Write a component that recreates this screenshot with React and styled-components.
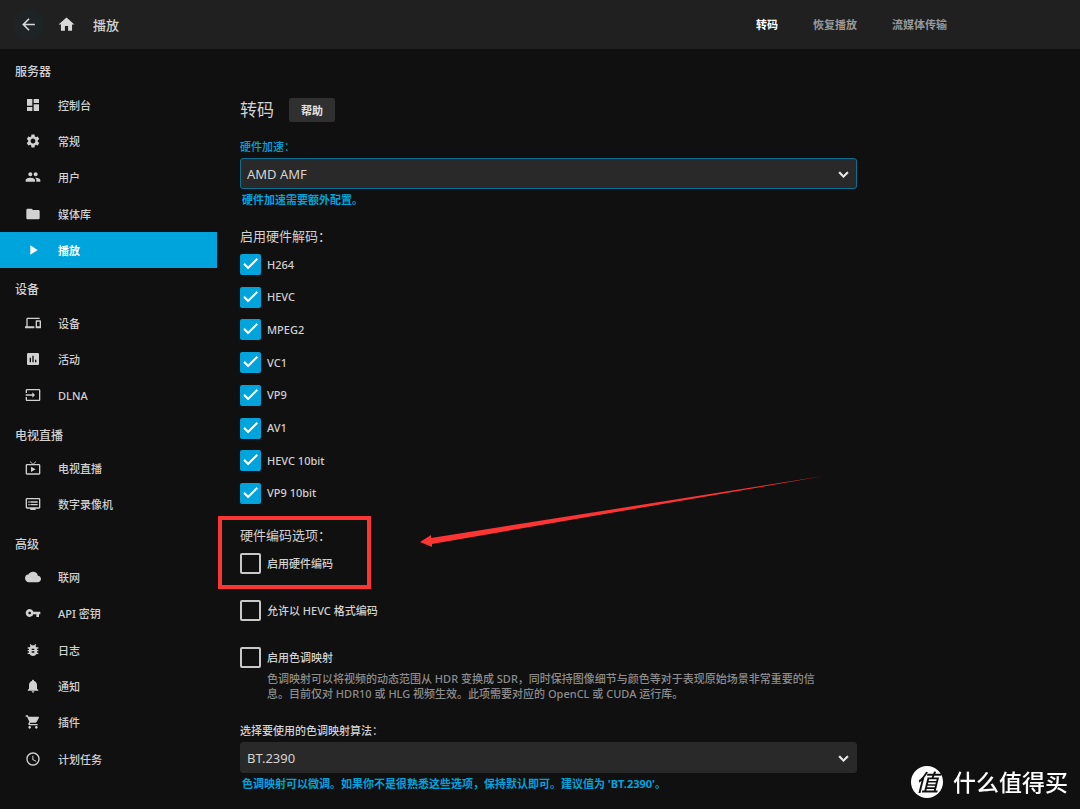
import React, { useState } from 'react';
import styled, { createGlobalStyle } from 'styled-components';
import {
  MdArrowBack,
  MdHome,
  MdDashboard,
  MdSettings,
  MdPeople,
  MdFolder,
  MdPlayArrow,
  MdDevices,
  MdInsertChart,
  MdInput,
  MdLiveTv,
  MdDvr,
  MdCloud,
  MdVpnKey,
  MdBugReport,
  MdNotifications,
  MdShoppingCart,
  MdAccessTime,
  MdCheck,
  MdKeyboardArrowDown,
} from 'react-icons/md';

const menu = [
  {
    title: '服务器',
    items: [
      { name: '控制台', icon: MdDashboard },
      { name: '常规', icon: MdSettings },
      { name: '用户', icon: MdPeople },
      { name: '媒体库', icon: MdFolder },
      { name: '播放', icon: MdPlayArrow, active: true },
    ],
  },
  {
    title: '设备',
    items: [
      { name: '设备', icon: MdDevices },
      { name: '活动', icon: MdInsertChart },
      { name: 'DLNA', icon: MdInput },
    ],
  },
  {
    title: '电视直播',
    items: [
      { name: '电视直播', icon: MdLiveTv },
      { name: '数字录像机', icon: MdDvr },
    ],
  },
  {
    title: '高级',
    items: [
      { name: '联网', icon: MdCloud },
      { name: 'API 密钥', icon: MdVpnKey },
      { name: '日志', icon: MdBugReport },
      { name: '通知', icon: MdNotifications },
      { name: '插件', icon: MdShoppingCart },
      { name: '计划任务', icon: MdAccessTime },
    ],
  },
];

const tabs = ['转码', '恢复播放', '流媒体传输'];

const codecs = ['H264', 'HEVC', 'MPEG2', 'VC1', 'VP9', 'AV1', 'HEVC 10bit', 'VP9 10bit'];

const Checkbox = ({ label, defaultChecked = false }) => {
  const [checked, setChecked] = useState(defaultChecked);

  return (
    <CheckLabel>
      <CheckBox>
        <CheckInput
          type='checkbox'
          checked={checked}
          onChange={(e) => setChecked(e.target.checked)}
        />
        {checked && <MdCheck size={19} />}
      </CheckBox>
      {label}
    </CheckLabel>
  );
};

const SelectField = ({ id, label, options, help, focused }) => (
  <Field>
    <FieldLabel htmlFor={id} $focused={focused}>
      {label}
    </FieldLabel>
    <SelectWrap>
      <Select id={id} $focused={focused}>
        {options.map((option) => (
          <option key={option}>{option}</option>
        ))}
      </Select>
      <MdKeyboardArrowDown size={19} />
    </SelectWrap>
    <FieldHelp href='#help'>{help}</FieldHelp>
  </Field>
);

const App = () => {
  const [tab, setTab] = useState(tabs[0]);

  return (
    <React.Fragment>
      <GlobalStyle />
      <Header>
        <IconButton aria-label='返回' $lit>
          <MdArrowBack size={19} />
        </IconButton>
        <IconButton aria-label='主页'>
          <MdHome size={19} />
        </IconButton>
        <PageTitle>播放</PageTitle>
        <Tabs>
          {tabs.map((name) => (
            <Tab key={name} $active={name === tab} onClick={() => setTab(name)}>
              {name}
            </Tab>
          ))}
        </Tabs>
      </Header>
      <Body>
        <Sidebar>
          {menu.map((group) => (
            <React.Fragment key={group.title}>
              <MenuTitle>{group.title}</MenuTitle>
              {group.items.map(({ name, icon: Icon, active }) => (
                <MenuLink key={name} href='#menu' $active={active}>
                  <Icon size={16} />
                  <span>{name}</span>
                </MenuLink>
              ))}
            </React.Fragment>
          ))}
        </Sidebar>
        <Main>
          <TitleRow>
            <Title>转码</Title>
            <HelpButton>帮助</HelpButton>
          </TitleRow>

          <SelectField
            id='accel'
            label='硬件加速：'
            options={['AMD AMF']}
            help='硬件加速需要额外配置。'
            focused
          />

          <Section>
            <SectionTitle>启用硬件解码：</SectionTitle>
            <CodecList>
              {codecs.map((codec) => (
                <Checkbox key={codec} label={codec} defaultChecked />
              ))}
            </CodecList>
          </Section>

          <Section>
            <SectionTitle>硬件编码选项：</SectionTitle>
            <Options>
              <Checkbox label='启用硬件编码' />
              <Checkbox label='允许以 HEVC 格式编码' />
              <div>
                <Checkbox label='启用色调映射' />
                <Description>
                  色调映射可以将视频的动态范围从 HDR 变换成
                  SDR，同时保持图像细节与颜色等对于表现原始场景非常重要的信息。目前仅对 HDR10 或 HLG
                  视频生效。此项需要对应的 OpenCL 或 CUDA 运行库。
                </Description>
              </div>
            </Options>
            <Highlight />
            <Arrow width='404' height='74' viewBox='0 0 404 74'>
              <path d='M0 68 L11 61 L11 64 L404 2 L12 70 L12 73 Z' />
            </Arrow>
          </Section>

          <SelectField
            id='algorithm'
            label='选择要使用的色调映射算法：'
            options={['BT.2390']}
            help="色调映射可以微调。如果你不是很熟悉这些选项，保持默认即可。建议值为 'BT.2390'。"
          />
        </Main>
      </Body>
      <Watermark>
        <WatermarkLogo>值</WatermarkLogo>
        什么值得买
      </Watermark>
    </React.Fragment>
  );
};

export default App;

const GlobalStyle = createGlobalStyle`
  * {
    box-sizing: border-box;
  }

  body {
    margin: 0;
    background: #101010;
    color: #d1d1d1;
    font-family: 'Noto Sans', 'Noto Sans CJK SC', sans-serif;
    font-size: 11px;
    line-height: 16px;
  }

  button,
  select {
    font-family: inherit;
  }

  h1,
  h2,
  h3,
  p {
    margin: 0;
    font-weight: 400;
  }

  svg {
    flex-shrink: 0;
  }
`;

const Header = styled.header`
  display: flex;
  align-items: center;
  height: 49px;
  padding: 0 133px 0 13px;
  background: #202020;
`;

const IconButton = styled.button`
  display: flex;
  align-items: center;
  justify-content: center;
  width: 30px;
  height: 30px;
  margin-right: 8px;
  padding: 0;
  border: 0;
  border-radius: 50%;
  background: ${(props) => (props.$lit ? '#1e2426' : 'transparent')};
  color: #d8d8d8;
`;

const PageTitle = styled.h1`
  margin-left: 4px;
  font-size: 13px;
  font-weight: 500;
`;

const Tabs = styled.nav`
  display: flex;
  gap: 35px;
  margin-left: auto;
`;

const Tab = styled.button`
  padding: 0;
  border: 0;
  background: none;
  color: ${(props) => (props.$active ? '#fff' : '#999')};
  font-size: 11px;
  font-weight: 700;
  line-height: 16px;
`;

const Body = styled.div`
  display: flex;
  align-items: flex-start;
`;

const Sidebar = styled.nav`
  display: grid;
  flex: 0 0 217px;
  grid-auto-rows: 1fr;
  min-height: 728px;
  padding-top: 1px;
`;

const MenuTitle = styled.h3`
  display: flex;
  align-items: center;
  padding: 8px 0 0 15px;
  font-size: 12px;
  font-weight: 500;
`;

const MenuLink = styled.a`
  display: flex;
  align-items: center;
  gap: 17px;
  padding-left: 25px;
  background: ${(props) => (props.$active ? '#00a4dc' : 'transparent')};
  color: ${(props) => (props.$active ? '#fff' : 'inherit')};
  font-weight: ${(props) => (props.$active ? 700 : 500)};
  text-decoration: none;

  span {
    padding-top: 2px;
  }
`;

const Main = styled.main`
  flex: 1;
  min-width: 0;
  max-width: 663px;
  padding: 49px 23px 16px;
`;

const TitleRow = styled.div`
  display: flex;
  align-items: center;
  gap: 15px;
  margin-bottom: 17px;
`;

const Title = styled.h2`
  font-size: 17px;
  line-height: 24px;
`;

const HelpButton = styled.button`
  height: 24px;
  padding: 0 12px;
  border: 0;
  border-radius: 2px;
  background: #303030;
  color: #e0e0e0;
  font-size: 11px;
  font-weight: 700;
`;

const Field = styled.div`
  display: flex;
  flex-direction: column;
`;

const FieldLabel = styled.label`
  margin-bottom: 3px;
  color: ${(props) => (props.$focused ? '#00a4dc' : 'inherit')};
  font-weight: 500;
`;

const SelectWrap = styled.div`
  display: grid;
  align-items: center;
  margin-bottom: 3px;

  > * {
    grid-area: 1 / 1;
  }

  svg {
    justify-self: end;
    margin: 2px 4px 0 0;
    color: #e8e8e8;
    pointer-events: none;
  }

  path:last-child {
    stroke-width: 1px;
  }
`;

const Select = styled.select`
  width: 100%;
  height: 31px;
  padding: 0 6px;
  appearance: none;
  border: 1px solid ${(props) => (props.$focused ? '#0b6f92' : '#292929')};
  border-radius: 3px;
  outline: none;
  background: #292929;
  color: #d4d4d4;
  font-size: 13px;
`;

const FieldHelp = styled.a`
  padding-left: 2px;
  color: #00a4dc;
  font-weight: 700;
  text-decoration: none;
`;

const Section = styled.section`
  position: relative;
  margin: 19px 0 22px;
`;

const SectionTitle = styled.h3`
  margin-bottom: 9px;
  font-size: 13px;
  line-height: 18px;
`;

const CodecList = styled.div`
  display: grid;
  align-content: space-between;
  height: 250px;
`;

const Options = styled.div`
  display: grid;
  gap: 26px;
`;

const CheckLabel = styled.label`
  display: flex;
  align-items: center;
  gap: 6px;
  font-weight: 500;
`;

const CheckBox = styled.span`
  display: grid;
  place-items: center;
  width: 21px;
  height: 21px;

  > * {
    grid-area: 1 / 1;
  }

  svg {
    margin-bottom: 2px;
    color: #fff;
    pointer-events: none;
  }

  path:last-child {
    stroke-width: 1px;
  }
`;

const CheckInput = styled.input`
  width: 21px;
  height: 21px;
  margin: 0;
  appearance: none;
  border: 2px solid #c8c8c8;
  border-radius: 2px;

  &:checked {
    border-color: #00a4dc;
    background: #00a4dc;
  }
`;

const Description = styled.p`
  padding: 3px 32px 0 27px;
  color: #8c8c8c;
  font-weight: 500;
  line-height: 15px;
`;

const Highlight = styled.div`
  position: absolute;
  top: -10px;
  left: -22px;
  width: 153px;
  height: 73px;
  border: 4px solid #fb3434;
  pointer-events: none;
`;

const Arrow = styled.svg`
  position: absolute;
  top: -52px;
  left: 180px;
  fill: #fb3434;
  pointer-events: none;
`;

const Watermark = styled.div`
  position: fixed;
  right: 12px;
  bottom: 11px;
  display: flex;
  align-items: center;
  gap: 10px;
  color: #fff;
  font-size: 23px;
  font-weight: 500;
  line-height: 32px;
`;

const WatermarkLogo = styled.span`
  width: 32px;
  height: 32px;
  border-radius: 50%;
  background: #fff;
  color: #101010;
  font-style: italic;
  text-align: center;
`;
